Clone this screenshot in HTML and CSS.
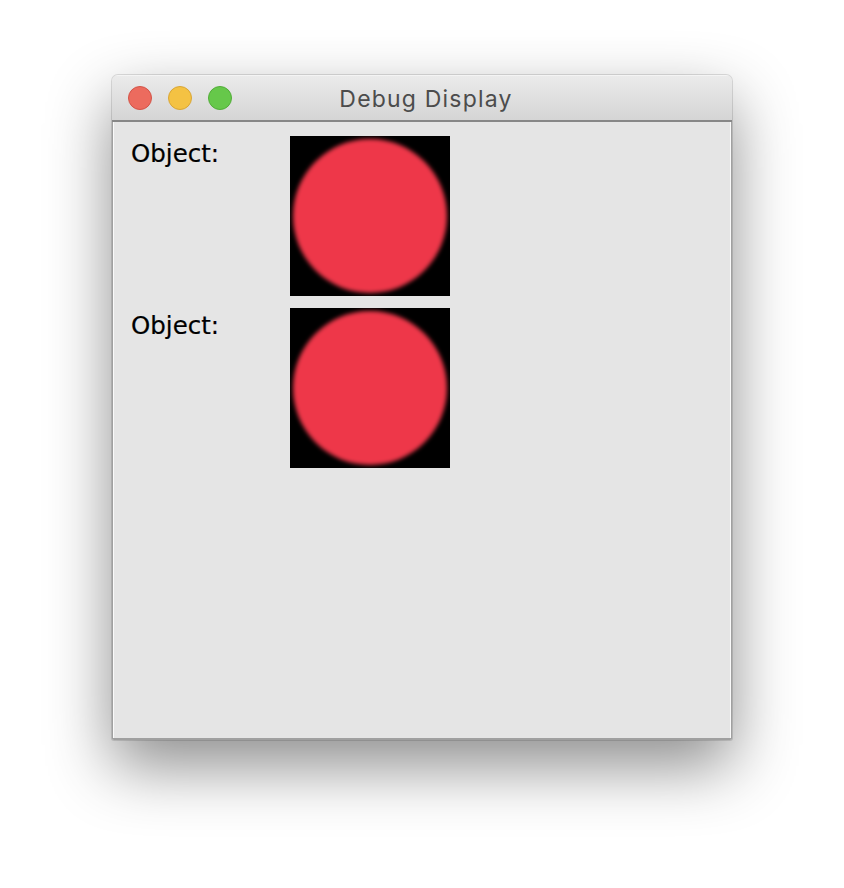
FILE: index.html
```html
<!DOCTYPE html>
<html>
<head>
<meta charset="utf-8">
<link rel="stylesheet" href="styles.css">
</head>
<body>
<div class="stage">
  <div class="window">
    <div class="titlebar">
      <div class="lights">
        <span class="light red"></span>
        <span class="light yellow"></span>
        <span class="light green"></span>
      </div>
      <div class="title">Debug Display</div>
    </div>
    <div class="content">
      <div class="row">
        <div class="label">Object:</div>
        <div class="thumb"><div class="ball"></div></div>
      </div>
      <div class="row">
        <div class="label">Object:</div>
        <div class="thumb"><div class="ball"></div></div>
      </div>
    </div>
  </div>
</div>
</body>
</html>
```
FILE: styles.css
```css
html, body {
  margin: 0;
  padding: 0;
  background: #ffffff;
}
.stage {
  width: 844px;
  height: 888px;
  display: flex;
  justify-content: center;
  padding-top: 75px;
  box-sizing: border-box;
}
.window {
  width: 620px;
  height: 665px;
  display: flex;
  flex-direction: column;
  border-radius: 6px 6px 2px 2px;
  box-shadow: 0 0 0 1px rgba(0,0,0,0.12), 0 26px 64px rgba(0,0,0,0.45);
  background: #e4e4e4;
  overflow: hidden;
}
.titlebar {
  position: relative;
  height: 44px;
  flex: none;
  background: linear-gradient(#ebebeb, #d5d5d5);
  border-top: 1px solid #f4f4f4;
  border-bottom: 2px solid #878787;
  box-sizing: content-box;
  display: flex;
  align-items: center;
  justify-content: center;
}
.lights {
  position: absolute;
  left: 16px;
  top: 10px;
  display: flex;
  gap: 16px;
}
.light {
  width: 24px;
  height: 24px;
  border-radius: 50%;
  box-sizing: border-box;
}
.red { background: #ec6b5e; border: 1px solid #d35448; }
.yellow { background: #f4c243; border: 1px solid #d9a636; }
.green { background: #66c84a; border: 1px solid #52ad39; }
.title {
  font-family: "Inter", "Liberation Sans", sans-serif;
  font-size: 23px;
  letter-spacing: 1.2px;
  color: #4c4c4c;
  margin-top: 2px;
  margin-left: 8px;
}
.content {
  flex: 1;
  background: #e5e5e5;
  border-left: 1px solid #a0a0a0;
  border-right: 1px solid #a0a0a0;
  border-bottom: 2px solid #a0a0a0;
  box-shadow: inset 1px 0 0 #fafafa, inset -1px 0 0 #fafafa;
  padding: 14px 0 0 18px;
  display: flex;
  flex-direction: column;
  gap: 12px;
}
.row {
  display: flex;
  align-items: flex-start;
}
.label {
  width: 159px;
  font-family: "DejaVu Sans", sans-serif;
  font-size: 24.5px;
  color: #000;
  line-height: 36px;
  -webkit-text-stroke: 0.2px #000;
}
.thumb {
  width: 160px;
  height: 160px;
  background: #000;
  display: flex;
  align-items: center;
  justify-content: center;
  overflow: hidden;
}
.ball {
  width: 154px;
  height: 154px;
  border-radius: 50%;
  background: #ee3749;
  filter: blur(2px);
}
```
